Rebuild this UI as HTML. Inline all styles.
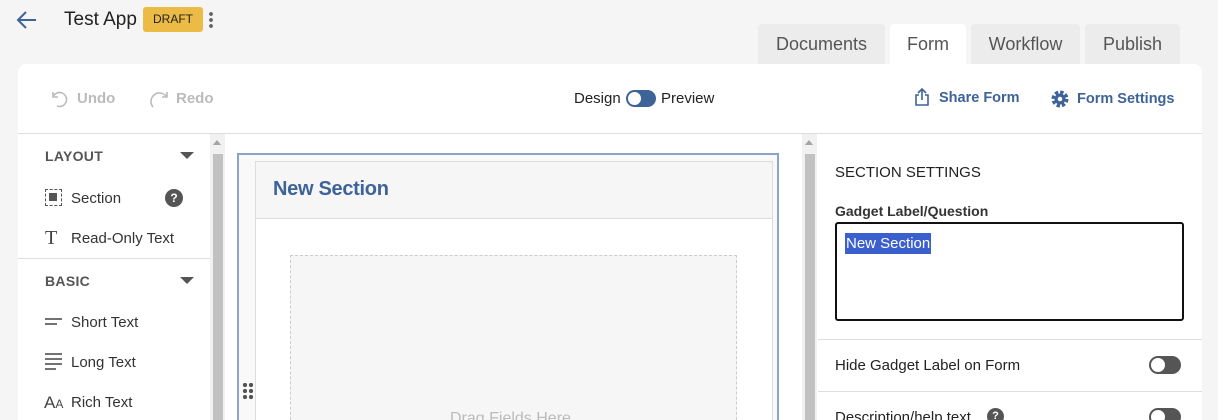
<!DOCTYPE html>
<html style="width:1218px;height:420px;overflow:hidden"><head><style>
*{box-sizing:border-box;margin:0;padding:0}
body{width:1218px;height:420px;overflow:hidden;background:#f5f5f5;font-family:"Liberation Sans",sans-serif;position:relative;color:#222}
.a{position:absolute}
.tab{position:absolute;top:24px;height:40px;background:#ececec;border-radius:4px 4px 0 0;font-size:18px;color:#555;text-align:center;line-height:40px}
.sb{position:absolute;top:134px;width:15px;height:286px;background:#f1f1f1}
.sb i{position:absolute;left:3px;top:20px;width:10px;height:270px;background:#c1c1c1}
.sb b{position:absolute;left:3px;top:6px;width:0;height:0;border-left:4px solid transparent;border-right:4px solid transparent;border-bottom:5px solid #a3a3a3}
.hd{font-size:14px;color:#555;font-weight:bold;letter-spacing:.3px}
.it{font-size:15px;color:#333}
.tri{width:0;height:0;border-left:7px solid transparent;border-right:7px solid transparent;border-top:7px solid #555}
.tog{width:32px;height:18px;border-radius:9px;background:#555}
.tog:after{content:"";position:absolute;left:2px;top:2px;width:14px;height:14px;border-radius:50%;background:#fff}
</style></head><body>
<svg class="a" style="left:16px;top:10px" width="22" height="20" viewBox="0 0 22 20"><path d="M20 10H3M10 2L2 10l8 8" fill="none" stroke="#3e6399" stroke-width="2"/></svg>
<div class="a" style="left:64px;top:9px;font-size:19px;color:#222">Test App</div>
<div class="a" style="left:143px;top:7px;width:60px;height:25px;background:#ecbb45;border-radius:3px;font-size:12px;line-height:25px;text-align:center;color:#222">DRAFT</div>
<div class="a" style="left:209px;top:11px;width:4px;height:18px;background:radial-gradient(circle,#666 1.8px,transparent 2px) 0 0/4px 6px"></div>
<div class="tab" style="left:758px;width:127px">Documents</div>
<div class="tab" style="left:890px;width:76px;background:#fff">Form</div>
<div class="tab" style="left:971px;width:109px">Workflow</div>
<div class="tab" style="left:1085px;width:95px">Publish</div>
<div class="a" style="left:18px;top:64px;width:1184px;height:370px;background:#fff;border-radius:8px"></div>
<div class="a" style="left:18px;top:133px;width:1184px;height:1px;background:#ddd"></div>
<svg class="a" style="left:49px;top:89px" width="20" height="20" viewBox="0 0 20 20"><path d="M4 3v5h5M4 8a7 7 0 1 1 4 9" fill="none" stroke="#bbb" stroke-width="1.6"/></svg>
<div class="a" style="left:77px;top:90px;font-size:15px;color:#bbb;font-weight:bold">Undo</div>
<svg class="a" style="left:149px;top:89px" width="22" height="22" viewBox="0 0 22 22"><path d="M18 3v5h-5M17 7A8 8 0 0 0 4 18" fill="none" stroke="#bbb" stroke-width="1.6"/></svg>
<div class="a" style="left:176px;top:90px;font-size:15px;color:#bbb;font-weight:bold">Redo</div>
<div class="a" style="left:574px;top:90px;font-size:15px;color:#222">Design</div>
<div class="a" style="left:626px;top:90px;width:30px;height:17px;border-radius:9px;background:#3e6399"><div class="a" style="left:2px;top:2px;width:13px;height:13px;border-radius:50%;background:#fff"></div></div>
<div class="a" style="left:661px;top:90px;font-size:15px;color:#222">Preview</div>
<svg class="a" style="left:914px;top:87px" width="16" height="20" viewBox="0 0 16 20"><path d="M5 8H2v10h12V8h-3M8 13V2M4 6l4-4 4 4" fill="none" stroke="#3e6399" stroke-width="1.6"/></svg>
<div class="a" style="left:939px;top:90px;font-size:14.5px;color:#3e6399;font-weight:bold">Share Form</div>
<svg class="a" style="left:1050px;top:89px" width="20" height="20" viewBox="0 0 20 20"><circle cx="10" cy="10" r="6.5" fill="none" stroke="#3e6399" stroke-width="4" stroke-dasharray="3.2 1.9"/><circle cx="10" cy="10" r="5.5" fill="#3e6399"/><circle cx="10" cy="10" r="2.3" fill="#fff"/></svg>
<div class="a" style="left:1077px;top:91px;font-size:14.5px;color:#3e6399;font-weight:bold">Form Settings</div>
<div class="a hd" style="left:45px;top:148px">LAYOUT</div>
<div class="a tri" style="left:180px;top:152px"></div>
<div class="a" style="left:45px;top:189px;width:17px;height:17px;border:1.5px dashed #555"><div class="a" style="left:3px;top:3px;width:8px;height:8px;background:#555"></div></div>
<div class="a it" style="left:71px;top:190px">Section</div>
<div class="a" style="left:165px;top:189px;width:18px;height:18px;border-radius:50%;background:#555;color:#fff;font-size:12px;font-weight:bold;text-align:center;line-height:18px">?</div>
<div class="a" style="left:45px;top:227px;font-size:20px;color:#444;font-family:'Liberation Serif',serif">T</div>
<div class="a it" style="left:71px;top:230px">Read-Only Text</div>
<div class="a" style="left:18px;top:258px;width:192px;height:1px;background:#ddd"></div>
<div class="a hd" style="left:45px;top:273px">BASIC</div>
<div class="a tri" style="left:180px;top:277px"></div>
<svg class="a" style="left:45px;top:317px" width="18" height="10"><path d="M0 2h17M0 7h12" stroke="#444" stroke-width="1.5"/></svg>
<div class="a it" style="left:71px;top:314px">Short Text</div>
<svg class="a" style="left:45px;top:353px" width="18" height="18"><path d="M0 1h17M0 6h17M0 11h17M0 16h11" stroke="#444" stroke-width="1.5"/></svg>
<div class="a it" style="left:71px;top:354px">Long Text</div>
<div class="a" style="left:44px;top:393px;font-size:17px;color:#444">A<span style="font-size:12px">A</span></div>
<div class="a it" style="left:71px;top:394px">Rich Text</div>
<div class="sb" style="left:210px"><b></b><i></i></div>
<div class="sb" style="left:802px"><b></b><i></i></div>
<div class="a" style="left:237px;top:153px;width:542px;height:280px;border:2px solid #8aa3c9;background:#f9f9f9"></div>
<div class="a" style="left:255px;top:161px;width:518px;height:270px;border:1px solid #ddd;background:#fff"></div>
<div class="a" style="left:255px;top:161px;width:518px;height:58px;border:1px solid #ddd;background:#f6f6f6"></div>
<div class="a" style="left:273px;top:178px;font-size:20px;font-weight:bold;color:#3e6399;letter-spacing:-.3px">New Section</div>
<div class="a" style="left:290px;top:255px;width:447px;height:180px;border:1px dashed #ccc;background:#f6f6f6"></div>
<div class="a" style="left:450px;top:410px;font-size:16px;color:#bbb">Drag Fields Here</div>
<div class="a" style="left:242px;top:382px;width:12px;height:18px;background:radial-gradient(circle,#555 2px,transparent 2.3px) 0 0/6px 6px"></div>
<div class="a" style="left:835px;top:164px;font-size:15px;color:#222">SECTION SETTINGS</div>
<div class="a" style="left:835px;top:203px;font-size:14px;color:#333;font-weight:bold">Gadget Label/Question</div>
<div class="a" style="left:835px;top:222px;width:349px;height:99px;border:2px solid #111;border-radius:3px"></div>
<div class="a" style="left:845px;top:233px;height:21px;background:#3b5fcc;color:#fff;font-size:15px;line-height:21px;padding:0 1px">New Section</div>
<div class="a" style="left:818px;top:339px;width:384px;height:1px;background:#ddd"></div>
<div class="a" style="left:835px;top:357px;font-size:15px;color:#222">Hide Gadget Label on Form</div>
<div class="a tog" style="left:1149px;top:356px"></div>
<div class="a" style="left:818px;top:391px;width:384px;height:1px;background:#ddd"></div>
<div class="a" style="left:835px;top:409px;font-size:15px;color:#222">Description/help text</div>
<div class="a" style="left:987px;top:408px;width:17px;height:17px;border-radius:50%;background:#555;color:#fff;font-size:11px;font-weight:bold;text-align:center;line-height:17px">?</div>
<div class="a tog" style="left:1149px;top:408px"></div>
</body></html>
